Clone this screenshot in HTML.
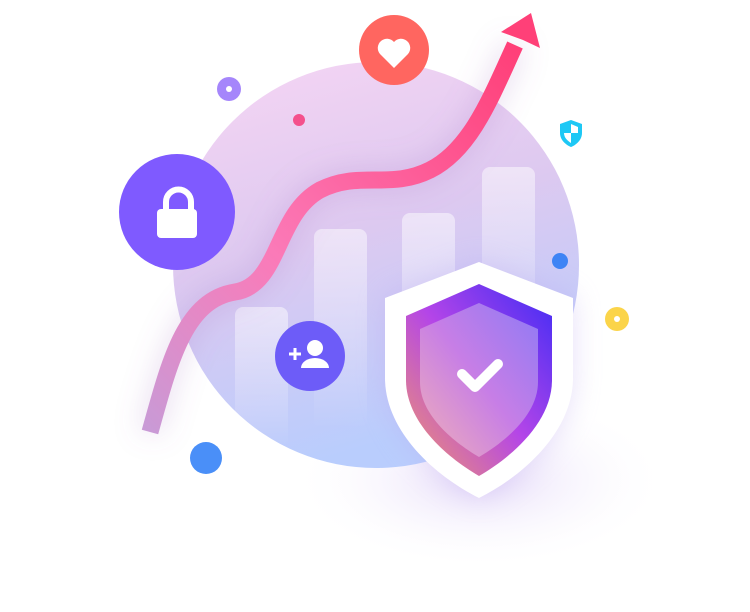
<!DOCTYPE html>
<html><head><style>html,body{margin:0;padding:0;background:#fff;width:750px;height:612px;overflow:hidden}</style></head>
<body>
<svg width="750" height="612" viewBox="0 0 750 612" xmlns="http://www.w3.org/2000/svg">
<defs>
<linearGradient id="bg" x1="0" y1="0" x2="0.3" y2="1">
<stop offset="0" stop-color="#f7d6f4"/><stop offset="0.5" stop-color="#ddc9f0"/><stop offset="1" stop-color="#b9cdfd"/></linearGradient>
<linearGradient id="bar" x1="0" y1="0" x2="0" y2="1"><stop offset="0" stop-color="#fff" stop-opacity="0.5"/><stop offset="1" stop-color="#fff" stop-opacity="0"/></linearGradient>
<linearGradient id="ar" x1="0" y1="1" x2="1" y2="0"><stop offset="0" stop-color="#c99ad6"/><stop offset="0.4" stop-color="#fb7ab8"/><stop offset="1" stop-color="#ff3f78"/></linearGradient>
<linearGradient id="sh" x1="0" y1="1" x2="1" y2="0"><stop offset="0" stop-color="#f29a6a"/><stop offset="0.5" stop-color="#b445e8"/><stop offset="1" stop-color="#3f2cf5"/></linearGradient>
<linearGradient id="shi" x1="0" y1="1" x2="1" y2="0"><stop offset="0" stop-color="#f0b0b8"/><stop offset="0.5" stop-color="#c77ee6"/><stop offset="1" stop-color="#8f7af5"/></linearGradient>
<radialGradient id="glow"><stop offset="0" stop-color="#d6c4f5" stop-opacity="0.6"/><stop offset="1" stop-color="#fff" stop-opacity="0"/></radialGradient>
<filter id="b" x="-50%" y="-50%" width="200%" height="200%"><feGaussianBlur stdDeviation="14"/></filter>
</defs>
<ellipse cx="480" cy="480" rx="190" ry="90" fill="url(#glow)"/>
<circle cx="376" cy="265" r="203" fill="url(#bg)"/>
<rect x="235" y="307" width="53" height="140" rx="8" fill="url(#bar)"/>
<rect x="314" y="229" width="53" height="200" rx="8" fill="url(#bar)"/>
<rect x="402" y="213" width="53" height="200" rx="8" fill="url(#bar)"/>
<rect x="482" y="167" width="53" height="200" rx="8" fill="url(#bar)"/>
<path d="M150 432 C170 360,185 300,235 292 C280 285,275 215,320 190 C360 170,390 190,430 170 C470 150,490 100,515 45" stroke="#a070c0" stroke-opacity="0.25" stroke-width="20" fill="none" filter="url(#b)"/>
<path d="M150 432 C170 360,185 300,235 292 C280 285,275 215,320 190 C360 170,390 190,430 170 C470 150,490 100,515 45" stroke="url(#ar)" stroke-width="17" fill="none"/>
<path d="M501 32 L531 13 L540 48 L523 40 Z" fill="#ff4078"/>
<circle cx="177" cy="212" r="58" fill="#7f5aff"/>
<path d="M166 212 v-10 a12.5 12.5 0 0 1 25 0 v10" stroke="#fff" stroke-width="6" fill="none"/>
<rect x="157" y="209" width="40" height="29" rx="4" fill="#fff"/>
<circle cx="394" cy="50" r="35" fill="#ff6660"/>
<path d="M394 68 L380 54 A8.5 8.5 0 0 1 394 42 A8.5 8.5 0 0 1 408 54 Z" fill="#fff"/>
<circle cx="310" cy="356" r="35" fill="#6d5cf8"/>
<circle cx="315" cy="348" r="8" fill="#fff"/>
<path d="M301 368 a14 10 0 0 1 28 0 z" fill="#fff"/>
<path d="M289 354 h12 M295 348 v12" stroke="#fff" stroke-width="3"/>
<circle cx="229" cy="89" r="12" fill="#a586fb"/><circle cx="229" cy="89" r="3" fill="#fff"/>
<circle cx="299" cy="120" r="6" fill="#f4508c"/>
<circle cx="560" cy="261" r="8" fill="#3e84f5"/>
<circle cx="617" cy="319" r="12" fill="#fbd44a"/><circle cx="617" cy="319" r="3" fill="#fff"/>
<circle cx="206" cy="458" r="16" fill="#4a8ff8"/>
<path d="M571 120 L582 124 V133 C582 140,576 145,571 147 C566 145,560 140,560 133 V124 Z" fill="#1ec8f5"/>
<path d="M571 124 L578 127 V133 H571 Z M571 133 H564 C564 138,568 141,571 143 Z" fill="#fff"/>
<path d="M479 262 L573 298 V378 C573 430,525 475,479 498 C433 475,385 430,385 378 V298 Z" fill="#b9a4ee" opacity="0.35" filter="url(#b)"/>
<path d="M479 262 L573 298 V378 C573 430,525 475,479 498 C433 475,385 430,385 378 V298 Z" fill="#fff"/>
<path d="M479 284 L552 316 V380 C552 420,515 455,479 476 C443 455,406 420,406 380 V316 Z" fill="url(#sh)"/>
<path d="M479 303 L538 329 V382 C538 413,508 440,479 457 C450 440,420 413,420 382 V329 Z" fill="url(#shi)"/>
<path d="M462 374 L475 387 L498 364" stroke="#fff" stroke-width="10" stroke-linecap="round" stroke-linejoin="round" fill="none"/>
</svg>
</body></html>
